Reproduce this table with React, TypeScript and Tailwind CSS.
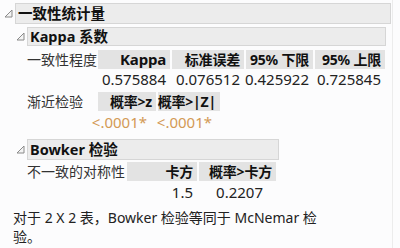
import React from "react";

const FONT = { fontFamily: '"Noto Sans", "Noto Sans CJK SC", sans-serif' };

function Disclosure() {
  return (
    <svg width="9" height="9" viewBox="0 0 9 9" className="shrink-0">
      <polygon points="8,1 8,8 1,8" fill="#f4f4f4" stroke="#8a8a8a" strokeWidth="1" />
    </svg>
  );
}

function OutlineHeader({ title, width, height }: { title: string; width: string; height: string }) {
  return (
    <div className="flex items-center">
      <div className="w-[12px] flex justify-start pl-[1px]">
        <Disclosure />
      </div>
      <div
        className={`${width} ${height} flex items-center pl-[2px] bg-[#ececec] border border-[#d6d6d6] text-[14.5px] font-bold text-[#111] whitespace-nowrap`}
      >
        {title}
      </div>
    </div>
  );
}

function HeadCell({ children, w, className = "" }: { children: React.ReactNode; w: string; className?: string }) {
  return (
    <div
      className={`${w} h-[19px] bg-[#e3e3e3] flex items-center justify-end pr-[4px] font-bold text-[#111] whitespace-nowrap tracking-[-0.2px] ${className}`}
    >
      {children}
    </div>
  );
}

function DataCell({ children, w, className = "" }: { children: React.ReactNode; w: string; className?: string }) {
  return (
    <div className={`${w} h-[19px] flex items-center justify-end pr-[4px] whitespace-nowrap text-[15px] ${className}`}>
      {children}
    </div>
  );
}

export default function App() {
  return (
    <div className="w-[400px] h-[248px] bg-[#fcfcfd] relative overflow-hidden text-[14px] text-[#222]" style={FONT}>
      <div className="absolute right-[7px] top-0 bottom-0 w-px bg-[#ececec]" />
      <div className="pt-[3px] pl-[3px]">
        <OutlineHeader title="一致性统计量" width="w-[376px]" height="h-[21px]" />

        <div className="pl-[12px] pt-[3px]">
          <OutlineHeader title="Kappa 系数" width="w-[359px]" height="h-[19px]" />

          {/* agreement table */}
          <div className="flex pt-[4px] pl-[12px]">
            <div className="w-[71px] h-[19px] flex items-center text-[#333] whitespace-nowrap">一致性程度</div>
            <div className="flex flex-col gap-[1px]">
              <div className="flex gap-[2px]">
                <HeadCell w="w-[72px]" className="text-[15px]">Kappa</HeadCell>
                <HeadCell w="w-[72px]">标准误差</HeadCell>
                <HeadCell w="w-[67px]">95% 下限</HeadCell>
                <HeadCell w="w-[70px]">95% 上限</HeadCell>
              </div>
              <div className="flex gap-[2px]">
                <DataCell w="w-[72px]">0.575884</DataCell>
                <DataCell w="w-[72px]">0.076512</DataCell>
                <DataCell w="w-[67px]">0.425922</DataCell>
                <DataCell w="w-[70px]">0.725845</DataCell>
              </div>
            </div>
          </div>

          {/* asymptotic test */}
          <div className="flex pt-[3px] pl-[12px]">
            <div className="w-[71px] h-[19px] flex items-center text-[#333] whitespace-nowrap">渐近检验</div>
            <div className="flex flex-col gap-[2px]">
              <div className="flex gap-[2px]">
                <HeadCell w="w-[58px]" className="pr-[3px]">概率&gt;z</HeadCell>
                <HeadCell w="w-[62px]" className="pr-[2px]">概率&gt;|Z|</HeadCell>
              </div>
              <div className="flex gap-[2px] text-[#d39a55]">
                <DataCell w="w-[58px]" className="pr-[9px] text-[14px]">&lt;.0001*</DataCell>
                <DataCell w="w-[62px]" className="pr-[8px] text-[14px]">&lt;.0001*</DataCell>
              </div>
            </div>
          </div>

          <div className="pt-[7px]">
            <OutlineHeader title="Bowker 检验" width="w-[252px]" height="h-[21px]" />
          </div>

          {/* symmetry test */}
          <div className="flex pt-[2px] pl-[12px]">
            <div className="w-[100px] h-[19px] flex items-center text-[#333] whitespace-nowrap">不一致的对称性</div>
            <div className="flex flex-col gap-[2px]">
              <div className="flex gap-[2px]">
                <HeadCell w="w-[70px]">卡方</HeadCell>
                <HeadCell w="w-[77px]" className="pr-[1px]">概率&gt;卡方</HeadCell>
              </div>
              <div className="flex gap-[2px]">
                <DataCell w="w-[70px]">1.5</DataCell>
                <DataCell w="w-[77px]" className="pr-[13px]">0.2207</DataCell>
              </div>
            </div>
          </div>
        </div>

        <p className="pl-[10px] pt-[6px] leading-[19px] text-[#222] whitespace-nowrap">
          对于 2 X 2 表，Bowker 检验等同于 McNemar 检
          <br />
          验。
        </p>
      </div>
    </div>
  );
}
